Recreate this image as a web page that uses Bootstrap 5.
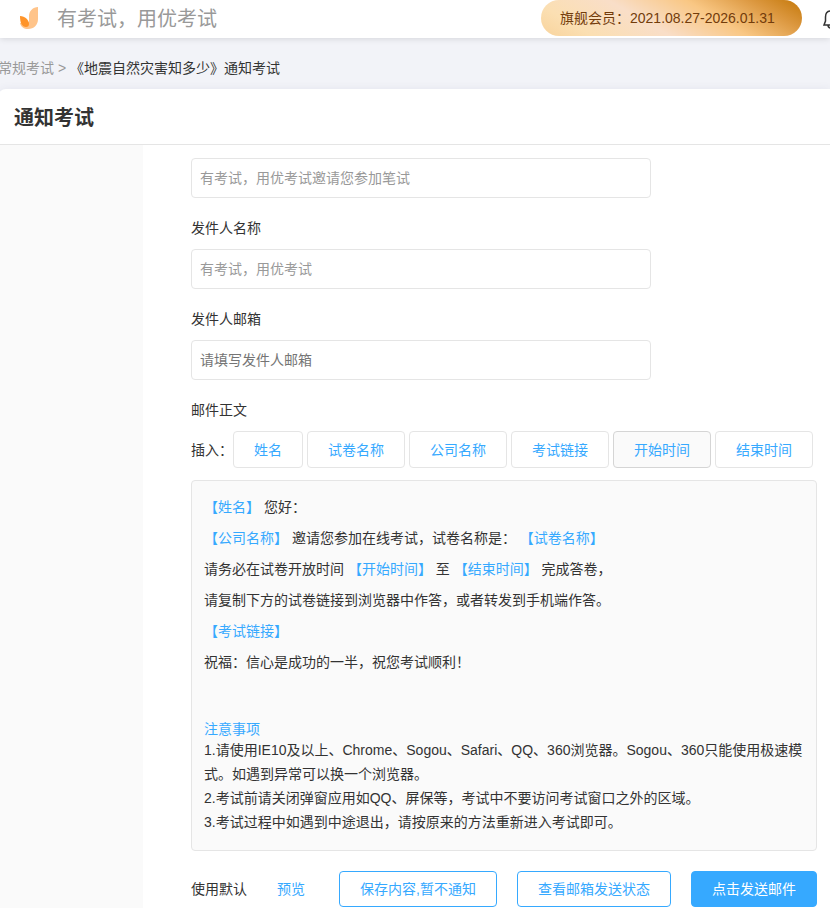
<!DOCTYPE html>
<html lang="zh-CN">
<head>
<meta charset="utf-8">
<meta name="viewport" content="width=device-width, initial-scale=1">
<title>通知考试</title>
<link rel="stylesheet" href="https://cdn.jsdelivr.net/npm/bootstrap@5.3.0/dist/css/bootstrap.min.css">
<style>
  body { font-family: "Liberation Sans", "Noto Sans CJK SC", sans-serif; font-size: 14px; line-height: 20px; color: #333; background: #f2f3f8; }
  a { color: #36a9ff; text-decoration: none; }
  .topbar { height: 38px; box-shadow: 0 1px 6px rgba(0, 0, 0, .12); }
  .brand { padding-left: 18px; gap: 16px; font-size: 20px; color: #999; }
  .member { height: 36px; width: 261px; padding-left: 19px; margin-right: 20px; color: #733c0b; background: linear-gradient(30deg, #f8d39c 0%, #fbdfb2 16%, #f9dec8 40%, #f9c784 64%, #dc9840 84%, #c4780a 100%); }
  .bell { width: 8px; height: 22px; }
  .page { margin-left: -2px; }
  .crumbs { padding: 20px 0 11px; color: #333; }
  .crumbs a { color: #999; }
  .panel { border-radius: 8px 0 0 0; box-shadow: 0 0 8px rgba(60, 70, 110, .08); }
  .panel-title { padding: 15px 16px 12px; border-bottom: 1px solid #e5e5e5; font-size: 20px; line-height: 28px; }
  .side { width: 145px; background: #fafafa; }
  .content { min-width: 0; padding: 13px 13px 1px 48px; }
  .field { max-width: 460px; margin-bottom: 20px; }
  .field label, .caption { display: block; margin-bottom: 11px; }
  .field .form-control { height: 40px; padding: 0 8px; font-size: 14px; border-color: #e5e5e5; border-radius: 4px; color: #333; }
  .field .form-control::placeholder { color: #757575; }
  .field .preset::placeholder { color: #999; }
  .btn { font-size: 14px; line-height: 20px; padding: 7px 20px; border-radius: 4px; white-space: nowrap; }
  .btn-insert { height: 37px; color: #36a9ff; border-color: #e5e5e5; background: #fff; }
  .btn-insert:hover, .btn-insert.active { color: #36a9ff !important; border-color: #d5d5d5 !important; background: #fafafa !important; }
  .btn-line { color: #36a9ff; border-color: #36a9ff; background: #fff; }
  .btn-send { color: #fff; border-color: #36a9ff; background: #36a9ff; }
  .editor { margin-top: 12px; padding: 11px 12px 16px; border: 1px solid #e5e5e5; border-radius: 4px; background: #fafafa; }
  .editor p { margin: 0; line-height: 31px; }
  .editor b { font-weight: 400; color: #36a9ff; }
  .notes { margin-top: 42px; line-height: 24px; }
  .notes h2 { margin: 0; font-size: 14px; font-weight: 400; line-height: 18px; color: #36a9ff; }
  .actions { margin-top: 20px; gap: 20px; }
  .minor { gap: 30px; }
</style>
<script src="https://cdn.jsdelivr.net/npm/bootstrap@5.3.0/dist/js/bootstrap.bundle.min.js"></script>
</head>
<body class="d-flex flex-column min-vh-100 overflow-x-hidden">
<header class="topbar bg-white d-flex justify-content-between position-relative">
  <div class="brand d-flex align-items-center">
    <svg width="23" height="24" viewBox="0 0 23 24" aria-hidden="true">
      <path d="M20 0v12c0 6-4 10-10 10-4 0-7-2-8-6l9-1V9c0-5 4-9 9-9z" fill="#ffc48a"/>
      <path d="M2 9c5 0 9 4 9 8 0 2-1 3-3 3-4 0-6-4-6-11z" fill="#ff9429"/>
    </svg>
    <span>有考试，用优考试</span>
  </div>
  <div class="d-flex">
    <div class="member rounded-pill d-flex align-items-center">旗舰会员：2021.08.27-2026.01.31</div>
    <svg class="bell align-self-center" viewBox="0 0 8 22" fill="none" stroke="#333" stroke-width="1.5" aria-hidden="true">
      <path d="M9 3C5 3 3.500 6 3.500 9v4l-1.500 4h7M6 17c0 2 1 3 3 3"/>
    </svg>
  </div>
</header>
<main class="page d-flex flex-column flex-grow-1">
  <nav class="crumbs" aria-label="位置"><a href="#">常规考试</a> <a href="#">&gt;</a> 《地震自然灾害知多少》通知考试</nav>
  <section class="panel bg-white d-flex flex-column flex-grow-1">
    <h1 class="panel-title fw-bold m-0">通知考试</h1>
    <div class="d-flex flex-grow-1">
      <aside class="side flex-shrink-0"></aside>
      <form class="content flex-grow-1">
        <div class="field"><input class="form-control preset" type="text" aria-label="邮件标题" placeholder="有考试，用优考试邀请您参加笔试"></div>
        <div class="field"><label for="sender">发件人名称</label><input class="form-control preset" id="sender" type="text" placeholder="有考试，用优考试"></div>
        <div class="field"><label for="mail">发件人邮箱</label><input class="form-control" id="mail" type="email" placeholder="请填写发件人邮箱"></div>
        <span class="caption" id="body-label">邮件正文</span>
        <div class="d-flex align-items-center">
          <span class="text-nowrap">插入：</span>
          <div class="d-flex flex-wrap gap-1">
            <button class="btn btn-insert" type="button">姓名</button>
            <button class="btn btn-insert" type="button">试卷名称</button>
            <button class="btn btn-insert" type="button">公司名称</button>
            <button class="btn btn-insert" type="button">考试链接</button>
            <button class="btn btn-insert active" type="button">开始时间</button>
            <button class="btn btn-insert" type="button">结束时间</button>
          </div>
        </div>
        <div class="editor" contenteditable="true" role="textbox" aria-multiline="true" aria-labelledby="body-label" spellcheck="false">
          <p><b>【姓名】</b> 您好：</p>
          <p><b>【公司名称】</b> 邀请您参加在线考试，试卷名称是： <b>【试卷名称】</b></p>
          <p>请务必在试卷开放时间 <b>【开始时间】</b> 至 <b>【结束时间】</b> 完成答卷，</p>
          <p>请复制下方的试卷链接到浏览器中作答，或者转发到手机端作答。</p>
          <p><b>【考试链接】</b></p>
          <p>祝福：信心是成功的一半，祝您考试顺利！</p>
          <div class="notes">
            <h2>注意事项</h2>
            <div>1.请使用IE10及以上、Chrome、Sogou、Safari、QQ、360浏览器。Sogou、360只能使用极速模式。如遇到异常可以换一个浏览器。</div>
            <div>2.考试前请关闭弹窗应用如QQ、屏保等，考试中不要访问考试窗口之外的区域。</div>
            <div>3.考试过程中如遇到中途退出，请按原来的方法重新进入考试即可。</div>
          </div>
        </div>
        <div class="actions d-flex flex-wrap align-items-center justify-content-between">
          <div class="minor d-flex"><a class="text-reset" href="#">使用默认</a><a href="#">预览</a></div>
          <div class="d-flex flex-wrap actions m-0">
            <button class="btn btn-line" type="button">保存内容,暂不通知</button>
            <button class="btn btn-line" type="button">查看邮箱发送状态</button>
            <button class="btn btn-send" type="submit">点击发送邮件</button>
          </div>
        </div>
      </form>
    </div>
  </section>
</main>
</body>
</html>
